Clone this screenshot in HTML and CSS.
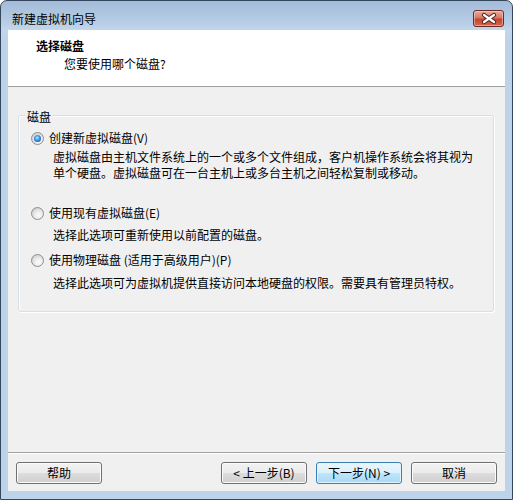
FILE: index.html
```html
<!DOCTYPE html>
<html lang="zh-CN">
<head>
<meta charset="utf-8">
<title>新建虚拟机向导</title>
<link rel="stylesheet" href="styles.css">
</head>
<body>
<div class="window">
  <div class="titlebar">
    <div class="title">新建虚拟机向导</div>
    <div class="close">
      <svg width="31" height="17" viewBox="0 0 31 17">
        <path d="M11 5 L21 12 M21 5 L11 12" stroke="#4a2620" stroke-width="4.2" stroke-linecap="round"/>
        <path d="M11 5 L21 12 M21 5 L11 12" stroke="#ffffff" stroke-width="2.2" stroke-linecap="round"/>
      </svg>
    </div>
  </div>
  <div class="client">
    <div class="header">
      <div class="h-title">选择磁盘</div>
      <div class="h-sub">您要使用哪个磁盘?</div>
    </div>
    <div class="body">
      <div class="group">
        <div class="legend">磁盘</div>
        <div class="opt opt1"><span class="radio on"></span><span>创建新虚拟磁盘(V)</span></div>
        <div class="desc desc1">虚拟磁盘由主机文件系统上的一个或多个文件组成，客户机操作系统会将其视为<br>单个硬盘。虚拟磁盘可在一台主机上或多台主机之间轻松复制或移动。</div>
        <div class="opt opt2"><span class="radio"></span><span>使用现有虚拟磁盘(E)</span></div>
        <div class="desc desc2">选择此选项可重新使用以前配置的磁盘。</div>
        <div class="opt opt3"><span class="radio"></span><span>使用物理磁盘 (适用于高级用户)(P)</span></div>
        <div class="desc desc3">选择此选项可为虚拟机提供直接访问本地硬盘的权限。需要具有管理员特权。</div>
      </div>
    </div>
    <div class="footer">
      <div class="btn">帮助</div>
      <div class="spacer"></div>
      <div class="btn">&lt; 上一步(B)</div>
      <div class="btn default">下一步(N) &gt;</div>
      <div class="btn">取消</div>
    </div>
  </div>
</div>
</body>
</html>
```
FILE: styles.css
```css
html, body {
  margin: 0;
  padding: 0;
  background: #ffffff;
}
body {
  font-family: "Noto Sans CJK SC", "Liberation Sans", sans-serif;
  font-size: 12px;
  color: #000;
}
.window {
  width: 513px;
  height: 500px;
  box-sizing: border-box;
  border: 1px solid #35475c;
  border-radius: 7px 7px 0 0;
  background: linear-gradient(to bottom, #a3bcd9 0, #b6cce5 20px, #c2d6ec 29px, #bcd3ea 40px, #bcd3ea 100%);
  display: flex;
  flex-direction: column;
  overflow: hidden;
}
.titlebar {
  height: 29px;
  display: flex;
  align-items: flex-start;
  justify-content: space-between;
  flex: none;
}
.title {
  margin: 10px 0 0 11px;
  line-height: 16px;
  color: #000;
}
.close {
  width: 31px;
  height: 17px;
  margin: 9px 8px 0 0;
  box-sizing: border-box;
  border: 1px solid #6b2b22;
  border-radius: 3px;
  background: linear-gradient(to bottom, #e9aa9c 0, #d57866 45%, #c4442e 55%, #d6664f 100%);
  box-shadow: inset 0 0 0 1px rgba(255, 220, 210, 0.5);
  position: relative;
}
.close svg {
  position: absolute;
  left: -1px;
  top: -1px;
}
.client {
  margin: 0 7px;
  height: 461px;
  flex: none;
  background: #f0f0f0;
  display: flex;
  flex-direction: column;
}
.header {
  height: 56px;
  background: #ffffff;
  border-bottom: 1px solid #a0a0a0;
  box-sizing: content-box;
  flex: none;
}
.h-title {
  margin: 8px 0 0 28px;
  line-height: 16px;
  font-weight: bold;
}
.h-sub {
  margin: 2px 0 0 56px;
  line-height: 16px;
}
.body {
  flex: 1;
  padding: 28px 11px 0 10px;
}
.group {
  border: 1px solid #d5dfe5;
  border-radius: 3px;
  box-shadow: inset 1px 1px 0 #ffffff, 1px 1px 0 #ffffff;
  padding: 0 0 20px 0;
}
.legend {
  width: fit-content;
  margin: -7px 0 0 6px;
  padding: 0 2px;
  line-height: 16px;
  background: #f0f0f0;
}
.opt {
  display: flex;
  align-items: center;
  height: 16px;
  line-height: 16px;
  margin-left: 12px;
}
.opt1 { margin-top: 5px; }
.opt2 { margin-top: 24px; }
.opt3 { margin-top: 9px; }
.radio {
  width: 13px;
  height: 13px;
  box-sizing: border-box;
  border-radius: 50%;
  border: 1px solid #8c8e90;
  background: radial-gradient(circle at 60% 65%, #fbfbfb 0, #eeeeee 35%, #d2d2d2 75%, #c4c4c4 100%);
  margin-right: 5px;
  flex: none;
  display: flex;
  align-items: center;
  justify-content: center;
}
.radio.on::after {
  content: "";
  width: 7px;
  height: 7px;
  border-radius: 50%;
  background: radial-gradient(circle at 45% 40%, #bfe8ff 0, #49a6ec 35%, #1a5fb8 75%, #0d3f86 100%);
}
.desc {
  margin-left: 34px;
  line-height: 16px;
}
.desc1 { margin-top: 3px; }
.desc2 { margin-top: 6px; }
.desc3 { margin-top: 7px; }
.footer {
  flex: none;
  border-top: 1px solid #a0a0a0;
  box-shadow: inset 0 1px 0 #ffffff;
  display: flex;
  align-items: flex-start;
  padding: 9px 8px 0 8px;
  box-sizing: border-box;
  height: 39px;
  gap: 9px;
}
.spacer {
  flex: 1;
}
.btn {
  width: 86px;
  height: 22px;
  box-sizing: border-box;
  border: 1px solid #707070;
  border-radius: 3px;
  background: linear-gradient(to bottom, #f2f2f2 0, #ebebeb 50%, #dddddd 50%, #cfcfcf 100%);
  box-shadow: inset 0 0 0 1px #fcfcfc;
  display: flex;
  align-items: center;
  justify-content: center;
  line-height: 16px;
  flex: none;
}
.btn.default {
  border-color: #3c7fb1;
  background: linear-gradient(to bottom, #eaf6fd 0, #d9f0fc 50%, #bee6fd 50%, #a7d9f5 100%);
  box-shadow: inset 0 0 0 1px #e0f4fe;
}
```
